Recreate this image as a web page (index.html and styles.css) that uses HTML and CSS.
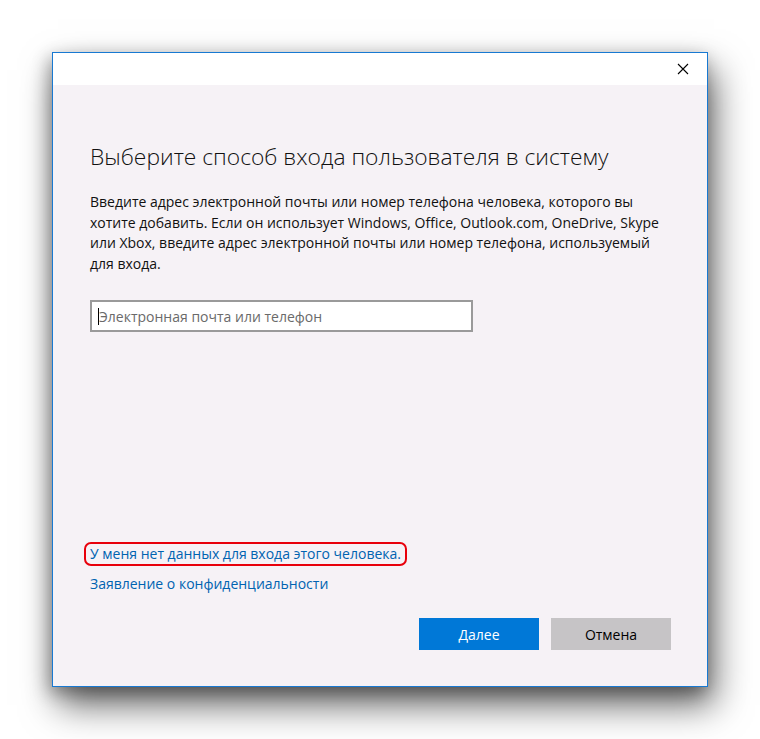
FILE: index.html
```html
<!DOCTYPE html>
<html lang="ru">
<head>
<meta charset="utf-8">
<link rel="stylesheet" href="styles.css">
</head>
<body>
<div class="window">
  <div class="titlebar">
    <svg class="close" width="12" height="12" viewBox="0 0 12 12"><path d="M1 1L11 11M11 1L1 11" stroke="#000" stroke-width="1.1" fill="none"/></svg>
  </div>
  <div class="content">
    <h1 class="title">Выберите способ входа пользователя в систему</h1>
    <p class="desc">Введите адрес электронной почты или номер телефона человека, которого вы хотите добавить. Если он использует Windows, Office, Outlook.com, OneDrive, Skype или Xbox, введите адрес электронной почты или номер телефона, используемый для входа.</p>
    <div class="input"><span class="caret"></span><span class="placeholder">Электронная почта или телефон</span></div>
    <div class="spacer"></div>
    <div class="links">
      <a class="link marked">У меня нет данных для входа этого человека.</a>
      <a class="link">Заявление о конфиденциальности</a>
    </div>
    <div class="buttons">
      <button class="btn primary">Далее</button>
      <button class="btn secondary">Отмена</button>
    </div>
  </div>
</div>
</body>
</html>
```
FILE: styles.css
```css
html, body {
  margin: 0;
  padding: 0;
  background: #fff;
}
body {
  box-sizing: border-box;
  min-height: 739px;
  padding: 52px 0 0 52px;
  font-family: "Open Sans", "Noto Sans", sans-serif;
}
.window {
  width: 654px;
  height: 633px;
  border: 1px solid #1879d2;
  background: #f6f2f6;
  box-shadow: 6px 18px 34px rgba(0,0,0,0.6), -3px 6px 16px rgba(0,0,0,0.3);
  display: flex;
  flex-direction: column;
}
.titlebar {
  height: 32px;
  background: #fff;
  display: flex;
  justify-content: flex-end;
  align-items: center;
  padding-right: 18px;
}
.close {
  display: block;
}
.content {
  flex: 1;
  display: flex;
  flex-direction: column;
  padding: 0 36px 36px 37px;
}
.title {
  margin: 56px 0 0 0;
  font-weight: 300;
  font-size: 22.8px;
  line-height: 32px;
  color: #111;
  white-space: nowrap;
}
.desc {
  margin: 19px 0 0 0;
  font-size: 14px;
  line-height: 20.5px;
  color: #111;
  width: 578px;
}
.input {
  margin-top: 26px;
  width: 373px;
  height: 28px;
  border: 2px solid #9a9a9a;
  background: #fff;
  display: flex;
  align-items: center;
  padding-left: 6px;
}
.caret {
  width: 1px;
  height: 17px;
  background: #000;
}
.placeholder {
  font-size: 14px;
  color: #6a6a6a;
}
.spacer { flex: 1; }
.links {
  display: flex;
  flex-direction: column;
  align-items: flex-start;
}
.link {
  font-size: 14px;
  line-height: 20px;
  color: #0063b1;
}
.marked {
  border: 2px solid #e8000b;
  border-radius: 7px;
  padding: 0 4px;
  margin-left: -6px;
  margin-bottom: 8px;
}
.buttons {
  margin-top: 24px;
  display: flex;
  justify-content: flex-end;
  gap: 12px;
}
.btn {
  width: 120px;
  height: 32px;
  border: none;
  font-family: inherit;
  font-size: 14px;
  padding: 0;
}
.primary { background: #0078d7; color: #fff; }
.secondary { background: #c6c4c6; color: #000; }
```
